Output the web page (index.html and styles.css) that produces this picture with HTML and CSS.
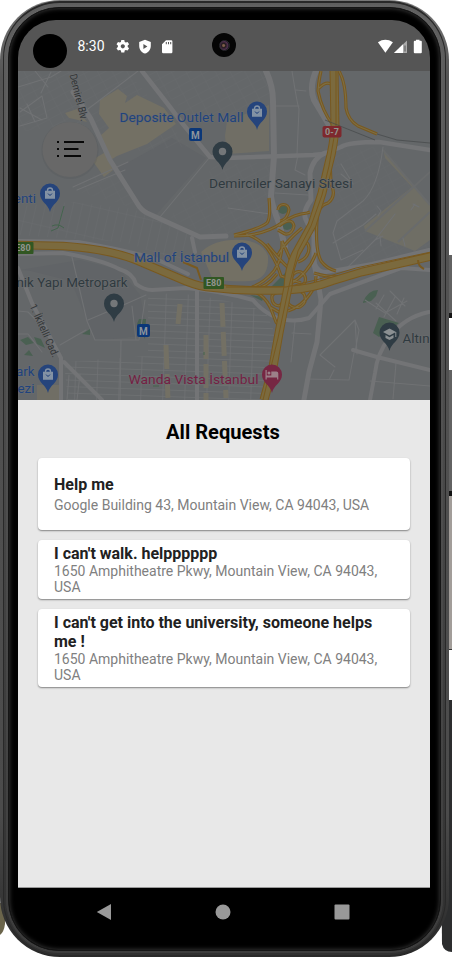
FILE: index.html
```html
<!DOCTYPE html>
<html lang="en">
<head>
<meta charset="utf-8">
<title>All Requests</title>
<link rel="stylesheet" href="styles.css">
</head>
<body>
<div class="desk">
<svg class="backdrop" viewBox="0 0 452 957" aria-hidden="true">
  <path d="M440 255h12v60h-12z" fill="#626262"/><path d="M440 313h12v5h-12z" fill="#151515"/>
  <path d="M440 370h12v123h-12z" fill="#626262"/><path d="M440 491h12v5h-12z" fill="#111"/>
  <path d="M440 496h12v153h-12z" fill="#a29d99"/><path d="M440 649h12v1h-12z" fill="#333"/>
  <path d="M440 700h12v252q-8 0-10-8z" fill="#2c2d2e"/>
  <path d="M0 903h5v21q-1 8-5 11z" fill="#6b654b"/>
</svg>
<div class="phone">
<div class="rim">
<div class="bezel">
<div class="screen">
  <header class="status">
    <span class="cutout"></span>
    <span class="clock">8:30</span>
    <svg class="sicons" width="60" height="16" viewBox="115 37 60 16" fill="#fff">
      <path fill-rule="evenodd" d="M121.300 39h3l.4 1.900 1.100.600 1.800-.600 1.500 2.400-1.400 1.300v1.300l1.400 1.300-1.500 2.400-1.800-.6-1.100.6-.4 1.900h-3l-.4-1.900-1.100-.6-1.800.6-1.500-2.400 1.400-1.300v-1.300l-1.400-1.300 1.500-2.400 1.800.6 1.100-.6zM122.800 43.200a2.100 2.100 0 1 0 .01 0z"/>
      <path fill-rule="evenodd" d="M145 38.700l5.800 2.200v4c0 3.600-2.400 6.500-5.800 7.700-3.400-1.200-5.800-4.100-5.800-7.700v-4zM143.400 43v5l4-2.500z"/>
      <path fill-rule="evenodd" d="M166 39.200h5.200q1.200 0 1.200 1.200V51q0 1.200-1.200 1.200h-8q-1.200 0-1.200-1.200v-7.800zM165.800 41v2.300h1V41zM168 41v2.300h1V41zM170.200 41v2.300h1V41z"/>
    </svg>
    <svg class="signal" width="48" height="16" viewBox="376 37 48 16" fill="#fff">
      <path d="M377.900 41.200q7.500-4.700 15 0L385.400 51.800z"/>
      <path d="M394 52l13-12.500V52z" fill="#aaa"/><path d="M394 52l9-8.700V52z"/><path d="M404.500 44.500h1v6h-1z" fill="#555"/>
      <path d="M416 39.700v-1h3.500v1h1.300q1 0 1 1v10.600q0 1-1 1h-6q-1 0-1-1V40.700q0-1 1-1z"/>
    </svg>
    <span class="lens"><i></i></span>
  </header>

  <svg class="map" viewBox="18 71 412 328.500">
    <defs>
      <pattern id="blocks" width="13" height="8" patternUnits="userSpaceOnUse" patternTransform="rotate(-28)"><path d="M0 0h13M0 0v8" stroke="#6b6d70" stroke-width=".8" fill="none"/></pattern>
      <pattern id="rows" width="9" height="30" patternUnits="userSpaceOnUse" patternTransform="rotate(13)"><path d="M0 0h9M0 0v30" stroke="#6c6f71" stroke-width=".8" fill="none"/></pattern>
      <pattern id="grid" width="22" height="6.500" patternUnits="userSpaceOnUse" patternTransform="rotate(2)"><path d="M0 0h22M0 0v7" stroke="#707274" stroke-width="1.400" fill="none"/></pattern>
      <path id="pin" d="M0 0C-1.500-8-10-10-10-18.500a10 10 0 0 1 20 0C10-10 1.500-8 0 0z"/>
      <g id="bag" fill="none" stroke="#8392a4" stroke-width="1.400"><path d="M-4.300-20.500h8.600v6.600h-8.600z" fill="#8392a4"/><path d="M-2.500-20v-1.500a2.500 2.500 0 0 1 5 0v1.500"/><path d="M-2-18.500q2 3.500 4 0" stroke="#25447c" stroke-width="1"/></g>
    </defs>
    <path fill="#646769" d="M18 71h412v329H18z"/>
    <path fill="#616467" d="M118 168l54-30 34 20-50 57-15-6-20-32zM20 270l60-10 40 10 20 25 8 40-52 6-25-60-40-10z"/>
    <path fill="url(#blocks)" opacity=".6" d="M18 71h110l60 75-80 8-20-32-70 10zM226 71h40l6 28-72 26-60-54z"/>
    <path fill="url(#blocks)" opacity=".45" d="M113 160l28 50-68-20zM215 165l55-2v70l-60 2-40-18zM335 155l48-10 47 60v50l-80 20-15-60z"/>
    <path fill="url(#rows)" d="M18 206l55-4 60 7 63 29-12 24-60-20-106-7z"/>
    <g fill="#737064">
      <path d="M100 100l18-11 9 7-2 7 12-8 27 13 12 16-29 20-30 12-8 5 4 9-9 7-12-17 12-7-4-17 9-8-10-14z"/>
      <path d="M227 121l42-16v46l-42 3-2-18z" opacity=".8"/><path d="M65 113l12-4 10 13-18-4z"/>
      <path d="M383 149l47 56v35l-15 11-50-20-1-5 48-39-27-29z" opacity=".75"/>
      <path d="M201 252q15-14 42-12 20 2 25 16 1 18-10 23-6 4-45 1z"/>
      <path d="M37 385h22v15H37z" opacity=".8"/>
    </g>
    <path d="M365 231l65-59M398 242l32-30M383 150l47 55" stroke="#696b6c" stroke-width="2" fill="none"/>
    <path fill="url(#grid)" d="M148 293l50 2 38 8 29 8 10 22-14 67H68l-4-38 84-6z"/>
    <g fill="none" stroke="#737064" stroke-width="5"><path d="M222 303l4 95M166 345l2 55M206 335v65M180 304l-2 20" stroke-dasharray="24 5"/></g>
    <g fill="#4a6052"><circle cx="283" cy="209" r="5"/><circle cx="287" cy="224" r="6"/><path d="M363 302q5-12 15-12l-2 6-5 5-8 2zM379 317l20 6-20 14-6-4z"/><path d="M20 340l8-3 6 6-8 2zM34 337l7 2 4 9-8-4zM29 350l4 6-9-1zM139 319h7l-1 20-8-15zM82 334l8-5v6z"/><path d="M270 288l18-18-2 16zM250 295l14 2-2 4z"/></g>

    <g fill="none" stroke="#737476" stroke-linejoin="round" stroke-linecap="round">
      <g stroke-width="1.100" stroke="#707274">
        <path d="M18 87l33-10 10-6M35 71l13 16M41 93l10-21M20 112l22-16 5 22-27 8M20 108l22 12M27 104l8 18M73 187l55-25M77 190l48-20M88 109l50-38M210 157l-50 60M228 208l42 6M275 193l33 2M292 71q5 32 7 38l-2 45M296 90l10 1M298 155l-3 15 10 5M275 106h24"/>
        <path d="M383 147q-5 40-20 54l-26 20-4 12 8 27 22-10M341 164l12 20-12-10M333 243l30-18 13-11M345 270l30-30 20-26M377 206l4 5-3 5M413 204l6 3M415 204l-4 6M375 240l8-4M380 236l1 10M403 238l2 8"/>
        <path d="M292 333l19 1M295 322l-4 40M320 355l35-35 4 10-4 22M320 355l15 12M355 320l2 34M307 379l42 1M396 363l-3 36M349 380l5-27M334 370l-5 10M370 381l60 5"/>
        <path d="M365 300l20 13 22-12M376 303l20 18M390 291l15 15M384 295l-8 14M395 297l-11 20M404 298l-7 16"/>
        <path d="M60 345l26-15M72 257l15 64 8 19h44l6-40M88 320l40-17 18-8M132 306l4 34M121 340l-1 60M18 311l10 1 10 10M18 334h10l14 18M69 375l-2 25M80 374l-3 26"/>
      </g>
      <path stroke-width="4.500" d="M142 71l28 36 12 16 28 34 16 1 87-3 10-1 18-7q8-5 38-5l51 8"/>
      <path stroke-width="5" d="M73 92l18 27 19 41 27 43q4 7 10 10l53 24 26-1"/>
      <path stroke-width="6" d="M266 71q7 15 7 30l1 55-3 40q1 10 8 27l6 24M316 71q-7 16-2 29l15 25"/>
      <path stroke-width="5" d="M325 153q-12 5-15 20l1 27q-9 12-5 20l8 16v28l4 18 3 18-4 42-8 30-6 33"/>
      <path stroke-width="4" d="M18 241l60 1q52 9 78 17l32 15M18 254l45-1q40 7 56 16 14 4 17 15 8 6 16 6l34-2q35 3 67 12 8 10 20 16 18 8 36 2l21-24 38-14 33-12 29 2M314 258q1 14 12 14l46-8 57-14M429 312q-25 5-40 26-12 16-14 35l-5 27M353 350l24 7 53 13"/>
      <path stroke-width="4" d="M18 268l14 35 29 55v42M64 362l38 38M192 238l3 14"/>
      <path stroke-width="4" d="M197 290v110"/>
    </g>

    <g fill="none" stroke-linejoin="round">
      <g stroke="#79591f" stroke-width="3.200">
        <path id="ramps" d="M321 71q-2 8-3 20 4 20 15 34M319 88q8-8 13-3M339 71q7 12 7 37 2 12 12 18l19 8M330 160l1 24q6 12-3 19-11 3-11 17-2 30 4 41 6 8 15 10M269 198q2 20-2 25-8 6-33 12M234 236q30 0 49-14 12-8 24-9l3-1M278 210a5.500 5.500 0 0 1 11 0q-2 10-9 11M279 226q13-10 15 0-2 9-9 8l-7-4M246 234q14 5 21 14 10 14 14 28l20 7M282 241l9 20M282 241q1 16-8 30-10 12-22 16M267 244q16 20 24 26M302 228q-18 15-24 27M300 244q8-5 9 4 0 10-11 14M291 278q4-8 10-6 6 4 4 10-2 5-13 5M283 293q-7-3-11 3-1 9 7 10 5-3 7-11M290 292q9-4 14 2 4 8-4 13-8 2-12-4l-2-12M240 288q22 2 30 19l14 8M269 304l7 18q5 5 4 10M316 276q0 10-6 18-8 12-22 17M316 253q-7 20-26 31M250 288q14 3 27-14M314 273q12 4 28 4"/>
      </g>
      <use href="#ramps" stroke="#7d6d43" stroke-width="1.200"/>
      <path id="e80" stroke="#79591f" stroke-width="8.500" d="M18 245l45 1q45 3 73 14l40 17q20 9 30 10 40 5 83 3 22-1 43-9l30-9 40-9 31-7"/>
      <path stroke="#7b6a3e" stroke-width="6.500" d="M18 245l45 1q45 3 73 14l40 17q20 9 30 10 40 5 83 3 22-1 43-9l30-9 40-9 31-7"/>
      <path stroke="#79591f" stroke-width="9" d="M334 71l1 55q-1 19-6 37l-7 30-10 32-14 25q-9 15-10 37l-9 46-6 34-9 33"/>
      <path stroke="#7b6a3e" stroke-width="7" d="M334 71l1 55q-1 19-6 37l-7 30-10 32-14 25q-9 15-10 37l-9 46-6 34-9 33"/>
      <path stroke="#79591f" stroke-width="1" d="M226 287h60l30-7 40-12 75-16M336 71v55l-7 40-7 29-11 31-13 25-9 35-11 52-15 62"/>
      <path stroke="#79591f" stroke-width="2" d="M418 260q0 6 6 9M183 262l14 6 4 12"/>
    </g>
    <path d="M325 120q25 10 50 20M377 134l20 6 33 3" stroke="#454749" stroke-width=".7" fill="none"/>
    <path d="M64 206l-6 22-7 3M52 226q6-3 12 2M153 386h6M204 352v3" stroke="#44644d" stroke-width="1" fill="none"/>

    <g class="shields">
      <rect x="322.500" y="126" width="19" height="11.500" rx="2" fill="#7e282d"/><text x="332" y="135.200">0-7</text>
      <rect x="8" y="242" width="25.500" height="12" rx="1" fill="#315722"/><text x="23" y="251.300">E80</text>
      <rect x="203.500" y="277" width="20.500" height="12" rx="1" fill="#315722"/><text x="213.700" y="286.300">E80</text>
    </g>
    <g class="metro">
      <rect x="189" y="128" width="13" height="13" rx="2"/><text x="195.500" y="138.500">M</text>
      <rect x="137" y="324" width="13" height="13" rx="2"/><text x="143.500" y="334.500">M</text>
    </g>

    <g fill="#25447c"><use href="#pin" x="257" y="130"/><use href="#pin" x="50" y="212"/><use href="#pin" x="242" y="271"/><use href="#pin" x="48" y="393"/></g>
    <use href="#bag" x="257" y="130"/><use href="#bag" x="50" y="212"/><use href="#bag" x="242" y="271"/><use href="#bag" x="48" y="393"/>
    <g fill="#2f3c44"><use href="#pin" x="222.500" y="170"/><use href="#pin" x="114" y="322"/><use href="#pin" x="389.500" y="351"/></g>
    <circle cx="222.500" cy="151.500" r="3.700" fill="#747779"/><circle cx="114" cy="303.500" r="3.700" fill="#747779"/>
    <path d="M383 332l6.500-3.500 6.500 3.500-6.500 3.500zM385.500 335l4 2.200 4-2.200v3l-4 2-4-2zM395.300 332h1v5h-1z" fill="#8b9092"/>
    <use href="#pin" x="272" y="393" fill="#762743"/>
    <path d="M265.500 370h1.200v5.500h4.600v-4h5q2 0 2 2v6h-1.200v-2h-10.400v2h-1.200z" fill="#9c8089"/><circle cx="269" cy="373" r="1.500" fill="#9c8089"/>

    <g class="labels">
      <g class="blue">
        <text x="119.500" y="121.500" textLength="124" lengthAdjust="spacingAndGlyphs">Deposite Outlet Mall</text>
        <text x="134" y="262" textLength="95" lengthAdjust="spacingAndGlyphs">Mall of İstanbul</text>
        <text x="36" y="203" text-anchor="end">enti</text>
        <text x="34.500" y="376" text-anchor="end">ark</text>
        <text x="34.500" y="392.500" text-anchor="end">ezi</text>
      </g>
      <text x="209" y="188" textLength="143.500" lengthAdjust="spacingAndGlyphs">Demirciler Sanayi Sitesi</text>
      <text x="127.500" y="286.500" text-anchor="end">nik Yapı Metropark</text>
      <text x="402.500" y="342.500">Altın</text>
      <text class="pink" x="128.500" y="384" textLength="130" lengthAdjust="spacingAndGlyphs">Wanda Vista İstanbul</text>
      <text class="road" transform="translate(69.500 75) rotate(76)" textLength="48" lengthAdjust="spacingAndGlyphs">Demirel Blv.</text>
      <text class="road" transform="translate(29.500 306) rotate(66)" textLength="57" lengthAdjust="spacingAndGlyphs">1. İkitelli Cad.</text>
    </g>

    <circle cx="70" cy="150.500" r="28.500" fill="#505356" opacity=".25"/>
    <circle cx="70" cy="149.500" r="27.500" fill="#686868"/>
    <path d="M57 142h2M57 149h2M57 156h2M64 142h20M64 149h14.500M64 156h17" stroke="#080808" stroke-width="2"/>
  </svg>

  <main class="sheet">
    <h1>All Requests</h1>
    <ul class="list">
      <li class="card roomy"><h2>Help me</h2><p>Google Building 43, Mountain View, CA 94043, USA</p></li>
      <li class="card"><h2>I can't walk. helpppppp</h2><p>1650 Amphitheatre Pkwy, Mountain View, CA 94043, USA</p></li>
      <li class="card tall"><h2>I can't get into the university, someone helps me !</h2><p>1650 Amphitheatre Pkwy, Mountain View, CA 94043, USA</p></li>
    </ul>
  </main>

  <nav class="nav">
    <svg width="16" height="18" viewBox="0 0 16 18"><path d="M.8 9L15 1v16z"/></svg>
    <svg width="16" height="18" viewBox="0 0 16 18"><circle cx="8" cy="9" r="7.500"/></svg>
    <svg width="16" height="18" viewBox="0 0 16 18"><rect x=".5" y="1.500" width="15" height="15" rx="1"/></svg>
  </nav>
</div>
</div>
</div>
</div>
</div>
</body>
</html>
```

FILE: styles.css
```css
* { box-sizing: border-box; margin: 0; padding: 0; }
body { background: #fff; font-family: Roboto, "Liberation Sans", sans-serif; overflow: hidden; }
.desk { position: relative; width: 452px; height: 957px; }
.backdrop { position: absolute; inset: 0; width: 452px; height: 957px; }
.phone {
  position: relative;
  width: 449px; height: 957px;
  padding: 1px 3px;
  border-radius: 60px;
  background: linear-gradient(#777, #555 8%, #4b4b4b 85%, #292929);
}
.rim {
  height: 100%;
  padding: 4px;
  border-radius: 57px;
  background: linear-gradient(#5f5f5f, #484848 50%, #303030);
  border: 1px solid #292929;
  border-top-width: 2px;
}
.bezel {
  height: 100%;
  padding: 12px 9px 57px;
  border-radius: 51px;
  background: #000;
  border: 1px solid #151515;
  box-shadow: 0 0 0 2px #6d6d6d33, inset 0 0 5px #444;
}
.screen {
  width: 412px; height: 916px;
  display: flex; flex-direction: column;
  background: #000;
  border-radius: 38px 38px 34px 34px;
  overflow: hidden;
}
.status {
  position: relative;
  height: 51px; flex: none;
  display: flex; align-items: center;
  padding: 0 6px 0 15px;
  background: #555;
}
.cutout { width: 34px; height: 34px; margin-top: 11px; border-radius: 50%; background: #000; }
.clock { margin-left: 10.500px; width: 30.500px; color: #fff; font-size: 14px; line-height: 16px; }
.sicons { margin-left: 7px; }
.signal { margin-left: auto; }
.lens {
  position: absolute; left: 194px; top: 13px;
  width: 24px; height: 24px; border-radius: 50%;
  background: #050505;
  display: flex; align-items: center; justify-content: center;
}
.lens i { width: 11px; height: 11px; border-radius: 50%; background: radial-gradient(circle at 40% 50%, #80604a 0 12%, #241c20 30%, #51304f 60%, #17171b 75%); border: 1px solid #29292e; }
.map { display: block; width: 412px; height: 328.500px; flex: none; }
.labels text { font-family: Roboto, sans-serif; font-size: 13.400px; fill: #2f3a3f; paint-order: stroke; stroke: #6b6d6f; stroke-width: 1.200px; }
.labels .blue text { fill: #1f437d; }
.labels .pink { fill: #741f43; }
.labels .road { font-size: 10.500px; fill: #303335; }
.shields text { font: 700 9px Roboto, sans-serif; fill: #92948f; text-anchor: middle; }
.metro rect { fill: #0b3778; }
.metro text { font: 700 10px Roboto, sans-serif; fill: #8c949c; text-anchor: middle; }
.sheet { height: 488.500px; flex: none; padding: 20.500px 20.500px 0 20px; background: #e8e8e8; border-bottom: 1px solid #999; }
.sheet h1 { font-size: 20.100px; line-height: 24px; font-weight: 700; color: #000; text-align: center; position: relative; left: -.8px; }
.list { list-style: none; display: flex; flex-direction: column; gap: 10px; margin-top: 13.500px; }
.card {
  height: 59px; padding: 4px 16px 0;
  background: #fff; border-radius: 4px;
  box-shadow: 0 1px 2px #0005, 0 1px 1px #0002;
}
.card.roomy { height: 72px; padding-top: 17px; }
.card.roomy p { margin-top: 3px; }
.card.tall { height: 78px; }
.card h2 { font-size: 16px; line-height: 19px; font-weight: 700; color: #212121; }
.card p { font-size: 14px; line-height: 16px; color: #808080; }
.nav { flex: 1; display: flex; padding: 0 77px 0 77.500px; justify-content: space-between; align-items: center; }
.nav svg { fill: #999; }
.nav svg:last-child { margin-right: 3px; }
```
